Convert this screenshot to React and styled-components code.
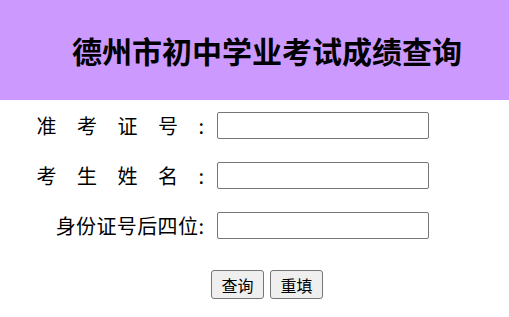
import React, { useState } from "react";
import styled, { createGlobalStyle } from "styled-components";

const GlobalStyle = createGlobalStyle`
  html, body {
    margin: 0;
    padding: 0;
    background: #fff;
    font-family: "Noto Sans CJK SC", "Noto Sans", sans-serif;
  }
`;

const Header = styled.div`
  height: 100px;
  background: #cc99ff;
  display: flex;
  align-items: center;
  justify-content: center;
  padding-left: 25px;
`;

const Title = styled.h1`
  margin: 0;
  font-size: 30px;
  font-weight: bold;
  color: #000;
  line-height: 1;
`;

const Form = styled.form`
  padding-top: 12px;
`;

const Grid = styled.div`
  display: grid;
  grid-template-columns: 169px 212px;
  column-gap: 13px;
  row-gap: 23px;
  padding-left: 35px;
`;

const Label = styled.label`
  font-size: 20px;
  line-height: 27px;
  text-align: right;
  color: #000;
  white-space: nowrap;
`;

const Spaced = styled.span`
  letter-spacing: ${(p) => p.$spacing || 0}px;
`;

const Field = styled.input`
  box-sizing: border-box;
  width: 212px;
  height: 27px;
  margin: 0;
  border: 1px solid #767676;
  border-radius: 2px;
  padding: 1px 4px;
  font-size: 16px;
  background: #fff;
`;

const Buttons = styled.div`
  display: flex;
  justify-content: center;
  gap: 6px;
  padding-left: 25px;
  margin-top: 31px;
`;

const Button = styled.button`
  box-sizing: border-box;
  width: 53px;
  height: 29px;
  padding: 0;
  font-family: inherit;
  font-size: 16px;
  color: #000;
  background: #efefef;
  border: 1px solid #767676;
  border-radius: 3px;
`;

const fields = [
  { name: "zkzh", text: "准考证号", spacing: 20.5 },
  { name: "xm", text: "考生姓名", spacing: 20.5 },
  { name: "sfz", text: "身份证号后四位", spacing: 0.4 },
];

export default function App() {
  const [values, setValues] = useState({ zkzh: "", xm: "", sfz: "" });

  return (
    <>
      <GlobalStyle />
      <Header>
        <Title>德州市初中学业考试成绩查询</Title>
      </Header>
      <Form onSubmit={(e) => e.preventDefault()}>
        <Grid>
          {fields.map((f) => (
            <React.Fragment key={f.name}>
              <Label htmlFor={f.name}>
                <Spaced $spacing={f.spacing}>{f.text}</Spaced>:
              </Label>
              <Field
                id={f.name}
                type="text"
                value={values[f.name]}
                onChange={(e) => setValues({ ...values, [f.name]: e.target.value })}
              />
            </React.Fragment>
          ))}
        </Grid>
        <Buttons>
          <Button type="submit">查询</Button>
          <Button type="reset" onClick={() => setValues({ zkzh: "", xm: "", sfz: "" })}>
            重填
          </Button>
        </Buttons>
      </Form>
    </>
  );
}
